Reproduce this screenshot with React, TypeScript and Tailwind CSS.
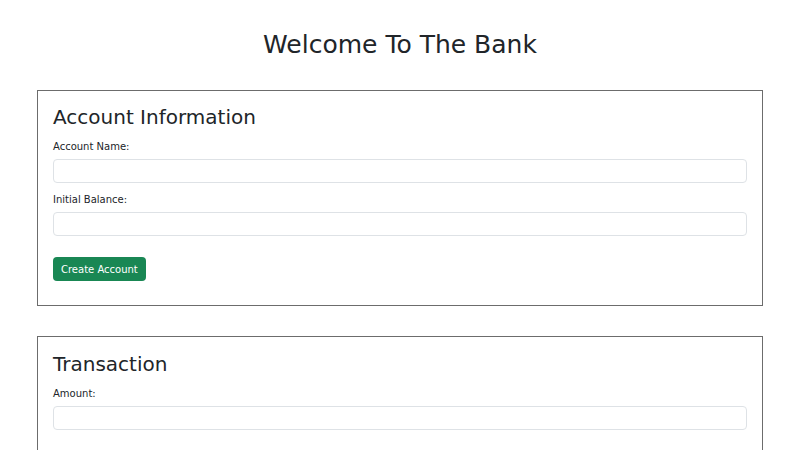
export default function App() {
  return (
    <div className="min-h-screen bg-white text-[#212529] font-['DejaVu_Sans',sans-serif] pt-[30px]">
      <h1 className="text-center text-[25px] leading-[1.2] font-normal">Welcome To The Bank</h1>

      <div className="mx-[37px] mt-[30px] border border-[#6c6c6c] px-[15px] pt-[14px] pb-[24px]">
        <h3 className="text-[20px] leading-[1.2] mb-[10px]">Account Information</h3>
        <label className="block text-[10px] leading-[1.5] mb-[5px]">Account Name:</label>
        <input
          type="text"
          className="block w-full h-[24px] rounded-[4px] border border-[#dee2e6] mb-[9px] outline-none"
        />
        <label className="block text-[10px] leading-[1.5] mb-[5px]">Initial Balance:</label>
        <input
          type="number"
          className="block w-full h-[24px] rounded-[4px] border border-[#dee2e6] outline-none"
        />
        <button className="mt-[21px] h-[24px] px-[8px] rounded-[4px] bg-[#198754] text-white text-[10px]">
          Create Account
        </button>
      </div>

      <div className="mx-[37px] mt-[30px] border border-[#6c6c6c] px-[15px] pt-[15px] pb-[24px]">
        <h3 className="text-[20px] leading-[1.2] mb-[10px]">Transaction</h3>
        <label className="block text-[10px] leading-[1.5] mb-[5px]">Amount:</label>
        <input
          type="number"
          className="block w-full h-[24px] rounded-[4px] border border-[#dee2e6] mb-[9px] outline-none"
        />
      </div>
    </div>
  );
}
